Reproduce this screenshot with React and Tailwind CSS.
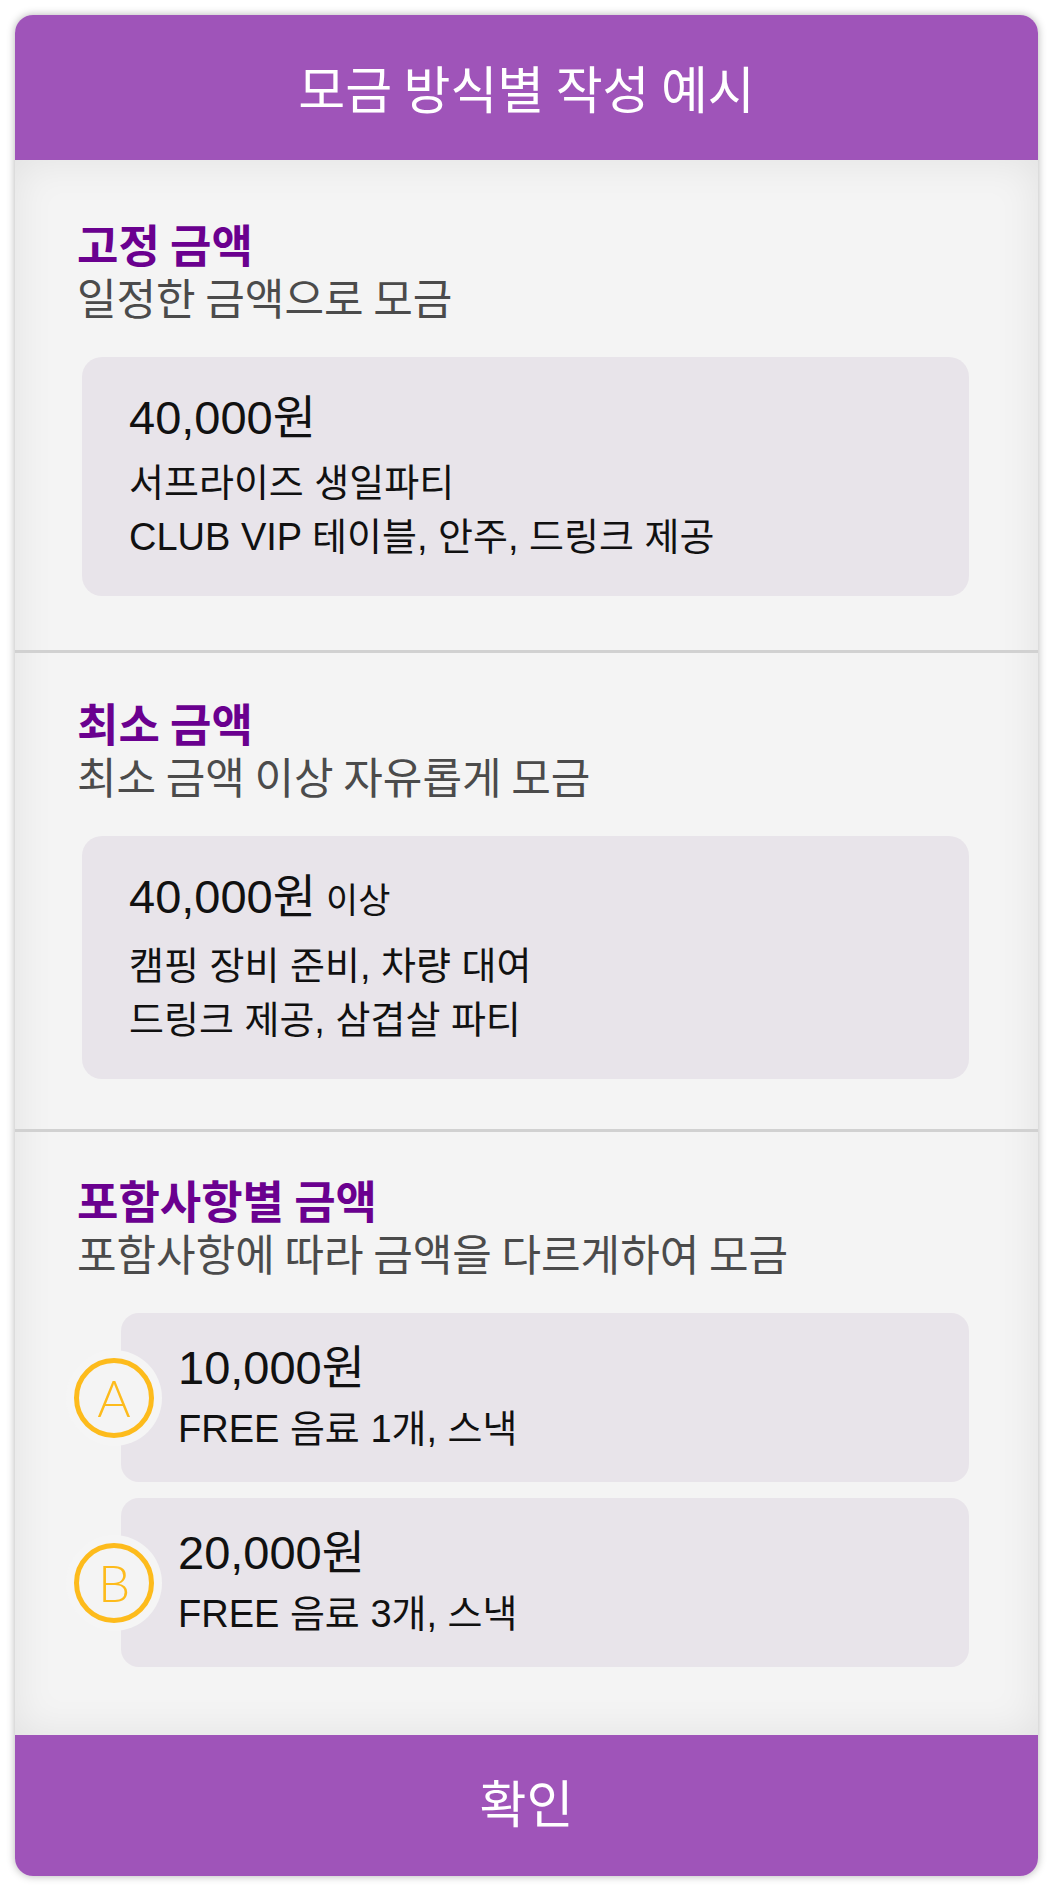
import React from 'react';

const boxes = [
  {
    title: '고정 금액',
    subtitle: '일정한 금액으로 모금',
    amount: '40,000원',
    suffix: null,
    lines: ['서프라이즈 생일파티', 'CLUB VIP 테이블, 안주, 드링크 제공'],
  },
  {
    title: '최소 금액',
    subtitle: '최소 금액 이상 자유롭게 모금',
    amount: '40,000원',
    suffix: '이상',
    lines: ['캠핑 장비 준비, 차량 대여', '드링크 제공, 삼겹살 파티'],
  },
];

const options = [
  { label: 'A', amount: '10,000원', line: 'FREE 음료 1개, 스낵' },
  { label: 'B', amount: '20,000원', line: 'FREE 음료 3개, 스낵' },
];

function Heading({ title, subtitle }) {
  return (
    <div>
      <h2 className="text-[45px] leading-[52px] font-bold text-[#6a008f]">{title}</h2>
      <p className="text-[43px] leading-[52px] text-[#4b4b4b]">{subtitle}</p>
    </div>
  );
}

function Badge({ label }) {
  return (
    <div className="absolute left-[-55px] top-1/2 -translate-y-1/2 w-[96px] h-[96px] rounded-full bg-[#f5f5f5] flex items-center justify-center">
      <div className="w-[80px] h-[80px] rounded-full border-[5px] border-[#fdbb1c] bg-[#f4f4f4] flex items-center justify-center text-[#fdbb1c] text-[51px] leading-none font-light font-['Lato',sans-serif]">
        {label}
      </div>
    </div>
  );
}

export default function App() {
  return (
    <div className="bg-white py-[15px] px-[15px] font-['Noto_Sans_CJK_KR',sans-serif]">
      <div className="rounded-[18px] overflow-hidden shadow-[0_0_8px_rgba(0,0,0,0.3)]">
        {/* Header */}
        <div className="h-[145px] bg-[#9f54b9] flex items-center justify-center text-white text-[51px]">
          모금 방식별 작성 예시
        </div>

        {/* Body */}
        <div className="bg-[#f4f4f4] shadow-[inset_0_0_40px_rgba(0,0,0,0.08)]">
          {boxes.map((b, i) => (
            <div
              key={b.title}
              className={`${i === 0 ? 'pt-[58px] pb-[54px]' : 'pt-[44px] pb-[50px]'} pl-[62px] pr-[69px] border-b-[3px] border-[#d1d1d1]`}
            >
              <Heading title={b.title} subtitle={b.subtitle} />
              <div className="ml-[5px] mt-[35px] rounded-[20px] bg-[#e8e4ea] pl-[47px] pt-[33px] pb-[32px] text-[#111] font-['Liberation_Sans','Noto_Sans_CJK_KR',sans-serif]">
                <div className="text-[47px] leading-[56px]">
                  {b.amount}
                  {b.suffix && <span className="ml-[10px] text-[35px]">{b.suffix}</span>}
                </div>
                <div className="mt-[10px] text-[38px] leading-[54px]">
                  {b.lines.map((l) => (
                    <p key={l}>{l}</p>
                  ))}
                </div>
              </div>
            </div>
          ))}

          <div className="pt-[42px] pb-[68px] pl-[62px] pr-[69px]">
            <Heading title="포함사항별 금액" subtitle="포함사항에 따라 금액을 다르게하여 모금" />
            <div className="mt-[35px] flex flex-col gap-[16px]">
              {options.map((o) => (
                <div
                  key={o.label}
                  className="relative ml-[44px] rounded-[18px] bg-[#e8e4ea] pl-[57px] pt-[27px] pb-[26px] text-[#111] font-['Liberation_Sans','Noto_Sans_CJK_KR',sans-serif]"
                >
                  <Badge label={o.label} />
                  <div className="text-[47px] leading-[56px]">{o.amount}</div>
                  <div className="mt-[6px] text-[38px] leading-[54px]">{o.line}</div>
                </div>
              ))}
            </div>
          </div>
        </div>

        {/* Footer */}
        <div className="h-[141px] pb-[8px] bg-[#9f54b9] flex items-center justify-center text-white text-[51px]">
          확인
        </div>
      </div>
    </div>
  );
}
